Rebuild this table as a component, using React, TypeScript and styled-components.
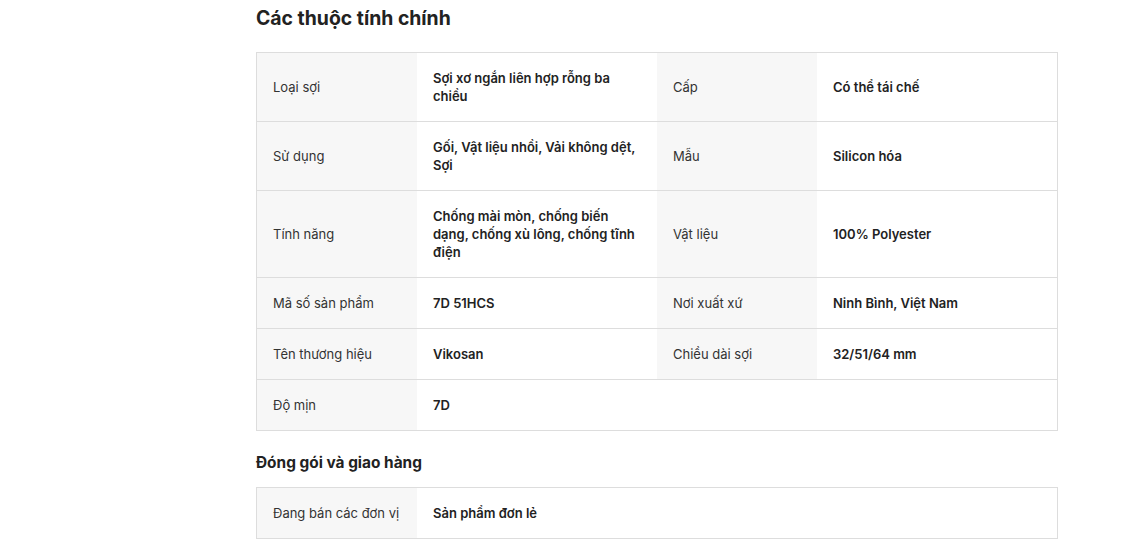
import React from "react";
import styled, { createGlobalStyle } from "styled-components";

const Global = createGlobalStyle`
  html, body { margin: 0; padding: 0; background: #fff; }
  body { font-family: Inter, "Noto Sans", sans-serif; color: #222; }
`;

const Page = styled.div`
  padding-left: 256px;
  width: 802px;
`;

const Title = styled.h2`
  margin: 4px 0 20px;
  font-size: 19.4px;
  line-height: 28px;
  font-weight: 700;
  color: #222;
`;

const SubTitle = styled.h3`
  margin: 20px 0 12px;
  font-size: 15.4px;
  line-height: 24px;
  font-weight: 700;
  color: #222;
`;

const Table = styled.div`
  border: 1px solid #ddd;
  border-bottom: none;
  width: 800px;
`;

const Row = styled.div`
  display: grid;
  grid-template-columns: 160px 240px 160px 240px;
  border-bottom: 1px solid #ddd;
`;

const Cell = styled.div<{ $label?: boolean }>`
  display: flex;
  align-items: center;
  padding: 16px;
  font-size: 13px;
  line-height: 18px;
  background: ${(p) => (p.$label ? "#f7f7f7" : "#fff")};
  color: ${(p) => (p.$label ? "#333" : "#222")};
  font-weight: ${(p) => (p.$label ? 400 : 600)};
`;

type Pair = [string, string];

const rows: Pair[][] = [
  [["Loại sợi", "Sợi xơ ngắn liên hợp rỗng ba chiều"], ["Cấp", "Có thể tái chế"]],
  [["Sử dụng", "Gối, Vật liệu nhồi, Vải không dệt, Sợi"], ["Mẫu", "Silicon hóa"]],
  [["Tính năng", "Chống mài mòn, chống biến dạng, chống xù lông, chống tĩnh điện"], ["Vật liệu", "100% Polyester"]],
  [["Mã số sản phẩm", "7D 51HCS"], ["Nơi xuất xứ", "Ninh Bình, Việt Nam"]],
  [["Tên thương hiệu", "Vikosan"], ["Chiều dài sợi", "32/51/64 mm"]],
  [["Độ mịn", "7D"]],
];

const packRows: Pair[][] = [[["Đang bán các đơn vị", "Sản phẩm đơn lẻ"]]];

const renderTable = (data: Pair[][]) => (
  <Table>
    {data.map((r, i) => (
      <Row key={i}>
        {r.map(([k, v]) => (
          <React.Fragment key={k}>
            <Cell $label>{k}</Cell>
            <Cell>{v}</Cell>
          </React.Fragment>
        ))}
      </Row>
    ))}
  </Table>
);

export default function App() {
  return (
    <>
      <Global />
      <Page>
        <Title>Các thuộc tính chính</Title>
        {renderTable(rows)}
        <SubTitle>Đóng gói và giao hàng</SubTitle>
        {renderTable(packRows)}
      </Page>
    </>
  );
}
